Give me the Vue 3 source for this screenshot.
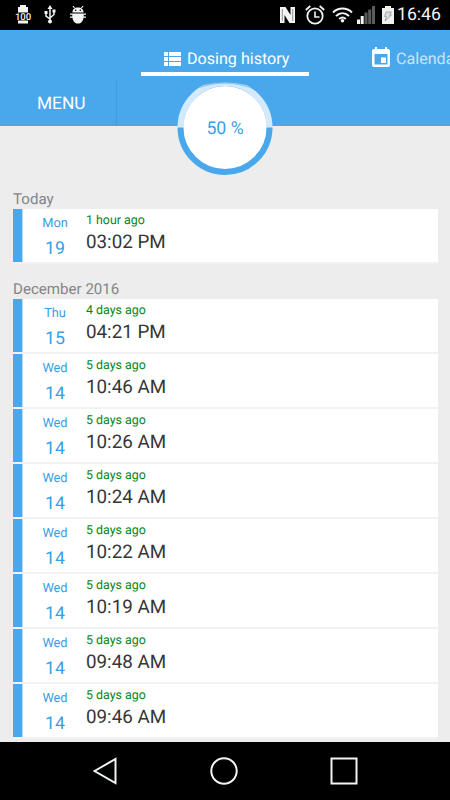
<script setup>
const percent = 50
const groups = [
  { title: 'Today', items: [{ day: 'Mon', date: '19', ago: '1 hour ago', time: '03:02 PM' }] },
  {
    title: 'December 2016',
    items: [
      { day: 'Thu', date: '15', ago: '4 days ago', time: '04:21 PM' },
      ...['10:46 AM', '10:26 AM', '10:24 AM', '10:22 AM', '10:19 AM', '09:48 AM', '09:46 AM'].map((time) => ({
        day: 'Wed', date: '14', ago: '5 days ago', time
      }))
    ]
  }
]
</script>

<template>
  <div class="screen">
    <div class="status">
      <div class="status-left">
        <svg width="18" height="20" viewBox="0 0 18 20">
          <path d="M6 0h6v2h2v5.500H4V2h2zM4 15.500h10v3H4z" fill="#f4f4f4" />
          <text x="9" y="15" text-anchor="middle" class="battery-text">100</text>
        </svg>
        <svg class="usb" width="12" height="20" viewBox="0 0 12 20">
          <path d="M6 3v13M2 7v4l4 3M10 6v3.500l-4 3.500" fill="none" stroke="#f4f4f4" stroke-width="1.500" />
          <path d="M6 0l2.500 4h-5zM.5 6h3v3h-3zM8.500 4.500h3v3h-3z" fill="#f4f4f4" />
          <circle cx="6" cy="16.500" r="2" fill="#f4f4f4" />
        </svg>
        <svg class="bug" width="16" height="18" viewBox="0 0 16 18">
          <path d="M4.500 2L3 0M11.500 2L13 0" stroke="#f4f4f4" stroke-width="1.200" />
          <path d="M2.500 6.500C2.500 3 4.500 1.500 8 1.500s5.500 1.500 5.500 5zM0 7.500h16v1.300h-2.300v1.700H16v1.200h-2.500c-.4 3.500-2.500 5.800-5.500 5.800s-5.100-2.300-5.500-5.800H0v-1.200h2.300V8.800H0z" fill="#f4f4f4" />
          <circle cx="5.700" cy="4.200" r=".8" /><circle cx="10.300" cy="4.200" r=".8" />
        </svg>
      </div>
      <div class="status-right">
        <svg width="17" height="18" viewBox="0 0 17 18">
          <path d="M1 1h5.500l5 8V1H16v16h-5.500l-5-8v8H1z" fill="#f4f4f4" />
          <path d="M3.300 3v12M13.700 3v12" stroke="#777" stroke-width=".8" />
        </svg>
        <svg class="alarm" width="20" height="20" viewBox="0 0 20 20" fill="none" stroke="#f4f4f4">
          <circle cx="10" cy="11" r="7.700" stroke-width="1.800" />
          <path d="M10 6.500V12h4.500" stroke-width="1.600" />
          <path d="M.8 5l4.500-4M19.200 5l-4.500-4" stroke-width="1.800" />
        </svg>
        <svg class="wifi" width="21" height="16" viewBox="0 0 21 16">
          <path d="M1 5.500C6.500.3 14.500.3 20 5.500M4 9c4-3.700 9-3.700 13 0M7.200 12c2-1.900 4.600-1.900 6.600 0" fill="none" stroke="#f4f4f4" stroke-width="2" />
          <circle cx="10.500" cy="13.800" r="1.800" fill="#f4f4f4" />
        </svg>
        <svg class="signal" width="18" height="18" viewBox="0 0 18 18">
          <path d="M0 13.500h3V18H0zM3.700 10h3v8h-3z" fill="#f4f4f4" />
          <path d="M7.500 6.500h3V18h-3zM11.200 3.500h3V18h-3zM15 0h3v18h-3z" fill="#5b5b5b" />
        </svg>
        <svg class="battery" width="12" height="18" viewBox="0 0 12 18">
          <path d="M3 0h6v2h3v16H0V2h3z" fill="#f0f0f0" />
          <path d="M4 6h5.500L7.500 9h2L3 15l1.500-4.500h-2z" fill="#ddd" stroke="#8e8e8e" stroke-width=".7" />
        </svg>
        <span class="clock">16:46</span>
      </div>
    </div>

    <header class="header">
      <nav class="tabs">
        <div class="tab active">
          <svg width="17" height="14" viewBox="0 0 17 14" fill="#fff">
            <path d="M0 0h4v4H0zM5 0h12v4H5zM0 5h4v4H0zM5 5h12v4H5zM0 10h4v4H0zM5 10h12v4H5z" />
          </svg>
          <span class="tab-label">Dosing history</span>
        </div>
        <div class="tab next">
          <svg width="18" height="20" viewBox="0 0 18 20">
            <path fill-rule="evenodd" d="M3 0h2v2h8V0h2v2h1q2 0 2 2v14q0 2-2 2H2q-2 0-2-2V4q0-2 2-2h1zM2.500 7v10.500h13V7zM9 10.500h5V16H9z" fill="#fff" />
          </svg>
          <span class="tab-label">Calendar</span>
        </div>
      </nav>
      <div class="menu-row"><div class="menu">MENU</div></div>
      <div class="gauge">
        <svg class="ring" width="96" height="96" viewBox="0 0 96 96">
          <circle cx="48" cy="48" r="42" fill="#fff" />
          <path d="M3.500 47.500a44.500 44.500 0 0 1 89 0" fill="none" stroke="#d4e9fa" stroke-width="6" />
          <path d="M3.500 47.500a44.500 44.500 0 0 0 89 0" fill="none" stroke="#49a8ec" stroke-width="6" />
          <path d="M20 8.800Q48-8 76 8.800Q48-1.500 20 8.800z" fill="#8dc8f3" />
          <path d="M26 0h44v5Q48-.5 26 5z" fill="#49a8ec" />
        </svg>
        <span class="percent">{{ percent }} %</span>
      </div>
    </header>

    <main class="history">
      <section v-for="group in groups" :key="group.title" class="group">
        <h2 class="title">{{ group.title }}</h2>
        <div class="list">
          <article v-for="item in group.items" :key="item.time" class="dose">
            <div class="bar"></div>
            <div class="date">
              <span class="weekday">{{ item.day }}</span>
              <span class="number">{{ item.date }}</span>
            </div>
            <div class="info">
              <span class="ago">{{ item.ago }}</span>
              <span class="time">{{ item.time }}</span>
            </div>
          </article>
        </div>
      </section>
    </main>

    <footer class="navbar">
      <svg width="24" height="28" viewBox="0 0 24 28"><path d="M1.500 14L22.500 2v24z" /></svg>
      <svg width="28" height="28" viewBox="0 0 28 28"><circle cx="14" cy="14" r="12.700" /></svg>
      <svg width="28" height="28" viewBox="0 0 28 28"><path d="M1.500 1.500h25v25h-25z" /></svg>
    </footer>
  </div>
</template>

<style>
body { margin: 0; overflow: hidden; }
</style>

<style scoped>
.screen {
  width: 450px;
  height: 800px;
  overflow: hidden;
  display: flex;
  flex-direction: column;
  background: #ededed;
  font-family: Roboto, sans-serif;
  text-rendering: geometricPrecision;
}
svg { display: block; flex: none; }
.status {
  height: 30px;
  flex: none;
  box-sizing: border-box;
  padding: 0 9px 0 14px;
  display: flex;
  justify-content: space-between;
  background: #000;
}
.status-left, .status-right { display: flex; align-items: center; }
.battery-text { font: 500 9.5px Roboto, sans-serif; fill: #f4f4f4; }
.usb { margin-left: 12px; }
.bug { margin-left: 14px; }
.alarm { margin-left: 9px; }
.wifi { margin-left: 7px; }
.signal { margin-left: 4px; }
.battery { margin-left: 7px; }
.clock { margin-left: 3px; font-size: 17.7px; line-height: 32px; color: #f4f4f4; }
.header {
  position: relative;
  height: 96px;
  flex: none;
  background: #49a8ec;
  color: #fff;
}
.tabs { height: 46px; display: flex; padding-left: 141px; }
.tab { display: flex; align-items: center; flex: none; padding-top: 15px; box-sizing: border-box; }
.active {
  width: 168px;
  padding-left: 23px;
  border-bottom: 4px solid #fff;
}
.active .tab-label { padding-top: 1px; }
.next { height: 46px; padding: 12px 0 4px; margin-left: 63px; }
.tab-label { font-size: 16.1px; line-height: 20px; margin-left: 6px; white-space: nowrap; }
.next .tab-label { color: #c7e4f9; padding-top: 3px; }
.menu-row { display: flex; padding-top: 3px; }
.menu {
  width: 117px;
  height: 47px;
  padding-left: 37px;
  box-sizing: border-box;
  border-right: 1px solid #419bdc;
  font-size: 17.3px;
  line-height: 51px;
}
.gauge {
  position: absolute;
  left: 177px;
  top: 50px;
  width: 96px;
  height: 96px;
  display: grid;
  place-items: center;
}
.ring, .percent { grid-area: 1 / 1; }
.percent { font-size: 17.7px; line-height: 24px; padding-top: 2px; color: #379fe6; }
.history { flex: 1; min-height: 0; overflow: hidden; box-sizing: border-box; padding: 62px 12px 0 13px; }
.group { margin-bottom: 14px; }
.title {
  margin: 0;
  height: 21px;
  font-size: 15.1px;
  font-weight: 400;
  line-height: 22px;
  color: #858585;
}
.dose {
  height: 55px;
  box-sizing: border-box;
  display: flex;
  background: #fff;
  border-bottom: 2px solid #f2f2f2;
}
.bar { width: 9px; background: #49a8ec; border-right: 1px solid #b7dcf8; }
.date { width: 64px; display: flex; flex-direction: column; align-items: center; color: #379fe6; }
.weekday { font-size: 12.8px; line-height: 16px; margin-top: 7px; }
.number { font-size: 17.7px; line-height: 22px; margin-top: 6px; }
.info { display: flex; flex-direction: column; margin-left: -1px; }
.ago { font-size: 12.4px; line-height: 16px; margin-top: 4px; color: #078512; }
.time { font-size: 18.8px; line-height: 24px; margin-top: 1px; color: #363636; }
.navbar {
  height: 58px;
  flex: none;
  box-sizing: border-box;
  padding: 0 92px 0 93px;
  display: flex;
  align-items: center;
  justify-content: space-between;
  background: #000;
}
.navbar svg { fill: none; stroke: #f2f5f5; stroke-width: 2; }
</style>
